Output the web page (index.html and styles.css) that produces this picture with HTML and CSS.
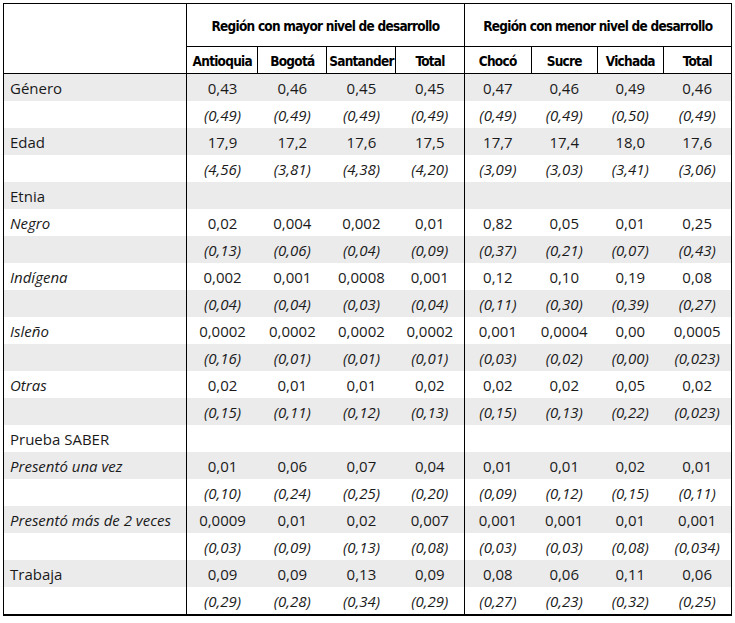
FILE: index.html
```html
<!DOCTYPE html>
<html lang="es">
<head>
<meta charset="utf-8">
<link rel="stylesheet" href="styles.css">
</head>
<body>
<table class="tbl">
<colgroup>
<col class="c-label"><col class="c71"><col class="c69"><col class="c69"><col class="c68"><col class="c67"><col class="c66"><col class="c66"><col class="c68">
</colgroup>
<thead>
<tr class="h1">
<th class="lab" rowspan="2"></th>
<th colspan="4" class="grp">Región con mayor nivel de desarrollo</th>
<th colspan="4" class="grp gsep">Región con menor nivel de desarrollo</th>
</tr>
<tr class="h2">
<th>Antioquia</th><th>Bogotá</th><th>Santander</th><th>Total</th>
<th class="gsep">Chocó</th><th>Sucre</th><th>Vichada</th><th>Total</th>
</tr>
</thead>
<tbody>
<tr class="g"><td class="lab">Género</td><td>0,43</td><td>0,46</td><td>0,45</td><td>0,45</td><td class="gsep">0,47</td><td>0,46</td><td>0,49</td><td>0,46</td></tr>
<tr class="se"><td class="lab"></td><td>(0,49)</td><td>(0,49)</td><td>(0,49)</td><td>(0,49)</td><td class="gsep">(0,49)</td><td>(0,49)</td><td>(0,50)</td><td>(0,49)</td></tr>
<tr class="g"><td class="lab">Edad</td><td>17,9</td><td>17,2</td><td>17,6</td><td>17,5</td><td class="gsep">17,7</td><td>17,4</td><td>18,0</td><td>17,6</td></tr>
<tr class="se"><td class="lab"></td><td>(4,56)</td><td>(3,81)</td><td>(4,38)</td><td>(4,20)</td><td class="gsep">(3,09)</td><td>(3,03)</td><td>(3,41)</td><td>(3,06)</td></tr>
<tr class="g"><td class="lab">Etnia</td><td></td><td></td><td></td><td></td><td class="gsep"></td><td></td><td></td><td></td></tr>
<tr><td class="lab it">Negro</td><td>0,02</td><td>0,004</td><td>0,002</td><td>0,01</td><td class="gsep">0,82</td><td>0,05</td><td>0,01</td><td>0,25</td></tr>
<tr class="g se"><td class="lab"></td><td>(0,13)</td><td>(0,06)</td><td>(0,04)</td><td>(0,09)</td><td class="gsep">(0,37)</td><td>(0,21)</td><td>(0,07)</td><td>(0,43)</td></tr>
<tr><td class="lab it">Indígena</td><td>0,002</td><td>0,001</td><td>0,0008</td><td>0,001</td><td class="gsep">0,12</td><td>0,10</td><td>0,19</td><td>0,08</td></tr>
<tr class="g se"><td class="lab"></td><td>(0,04)</td><td>(0,04)</td><td>(0,03)</td><td>(0,04)</td><td class="gsep">(0,11)</td><td>(0,30)</td><td>(0,39)</td><td>(0,27)</td></tr>
<tr><td class="lab it">Isleño</td><td>0,0002</td><td>0,0002</td><td>0,0002</td><td>0,0002</td><td class="gsep">0,001</td><td>0,0004</td><td>0,00</td><td>0,0005</td></tr>
<tr class="g se"><td class="lab"></td><td>(0,16)</td><td>(0,01)</td><td>(0,01)</td><td>(0,01)</td><td class="gsep">(0,03)</td><td>(0,02)</td><td>(0,00)</td><td>(0,023)</td></tr>
<tr><td class="lab it">Otras</td><td>0,02</td><td>0,01</td><td>0,01</td><td>0,02</td><td class="gsep">0,02</td><td>0,02</td><td>0,05</td><td>0,02</td></tr>
<tr class="g se"><td class="lab"></td><td>(0,15)</td><td>(0,11)</td><td>(0,12)</td><td>(0,13)</td><td class="gsep">(0,15)</td><td>(0,13)</td><td>(0,22)</td><td>(0,023)</td></tr>
<tr><td class="lab">Prueba SABER</td><td></td><td></td><td></td><td></td><td class="gsep"></td><td></td><td></td><td></td></tr>
<tr class="g"><td class="lab it">Presentó una vez</td><td>0,01</td><td>0,06</td><td>0,07</td><td>0,04</td><td class="gsep">0,01</td><td>0,01</td><td>0,02</td><td>0,01</td></tr>
<tr class="se"><td class="lab"></td><td>(0,10)</td><td>(0,24)</td><td>(0,25)</td><td>(0,20)</td><td class="gsep">(0,09)</td><td>(0,12)</td><td>(0,15)</td><td>(0,11)</td></tr>
<tr class="g"><td class="lab it">Presentó más de 2 veces</td><td>0,0009</td><td>0,01</td><td>0,02</td><td>0,007</td><td class="gsep">0,001</td><td>0,001</td><td>0,01</td><td>0,001</td></tr>
<tr class="se"><td class="lab"></td><td>(0,03)</td><td>(0,09)</td><td>(0,13)</td><td>(0,08)</td><td class="gsep">(0,03)</td><td>(0,03)</td><td>(0,08)</td><td>(0,034)</td></tr>
<tr class="g"><td class="lab">Trabaja</td><td>0,09</td><td>0,09</td><td>0,13</td><td>0,09</td><td class="gsep">0,08</td><td>0,06</td><td>0,11</td><td>0,06</td></tr>
<tr class="se"><td class="lab"></td><td>(0,29)</td><td>(0,28)</td><td>(0,34)</td><td>(0,29)</td><td class="gsep">(0,27)</td><td>(0,23)</td><td>(0,32)</td><td>(0,25)</td></tr>
</tbody>
</table>
</body>
</html>
```
FILE: styles.css
```css
html, body {
  margin: 0;
  padding: 0;
  background: #ffffff;
}
body {
  padding: 3px 0 0 3px;
}
.tbl {
  border-collapse: collapse;
  table-layout: fixed;
  width: 729px;
  font-family: "Open Sans", "Noto Sans", sans-serif;
  font-size: 15px;
  color: #1a1a1a;
  border-top: 1px solid #000;
  border-left: 1px solid #000;
  border-right: 1px solid #000;
  border-bottom: 2px solid #000;
}
.c-label { width: 183px; }
.c71 { width: 71px; }
.c69 { width: 69px; }
.c68 { width: 68px; }
.c67 { width: 67px; }
.c66 { width: 66px; }

th {
  font-family: "DejaVu Sans Condensed", "DejaVu Sans", sans-serif;
  font-stretch: condensed;
  font-weight: bold;
  font-size: 13.5px;
  letter-spacing: -0.75px;
  color: #000;
  padding: 0;
  text-align: center;
  border-left: 1px solid #000;
}
th.lab { border-right: 1px solid #000; }
.h1 th { height: 40px; border-bottom: 1px solid #000; padding-top: 2px; }
.h2 th { height: 24px; padding-top: 2px; }
thead { border-bottom: 1px solid #000; }

td {
  height: 26px;
  padding: 1px 0 0 0;
  text-align: center;
  white-space: nowrap;
}
td.lab {
  text-align: left;
  padding-left: 6px;
  border-right: 1px solid #000;
}
td.gsep, th.gsep { border-left: 1px solid #000; }
.it { font-style: italic; }
tr.se td { font-style: italic; }
tr.g td { background: #ebebec; }
```
